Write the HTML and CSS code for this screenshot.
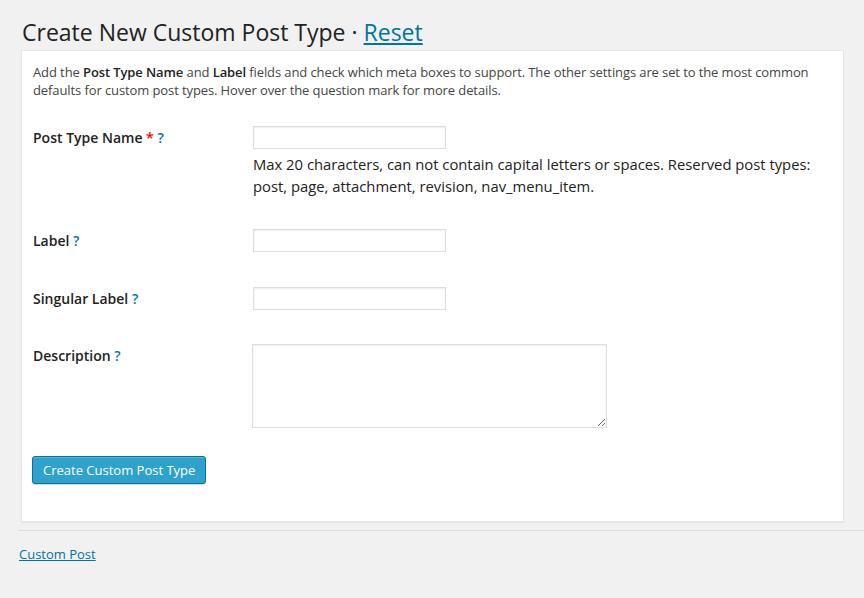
FILE: index.html
```html
<!DOCTYPE html>
<html lang="en">
<head>
<meta charset="utf-8">
<title>Create New Custom Post Type</title>
<link rel="stylesheet" href="styles.css">
</head>
<body>
<div class="wrap">
  <h2 class="page-title">Create New Custom Post Type · <a href="#" class="title-link">Reset</a></h2>
  <div class="panel">
    <p class="intro">Add the <strong>Post Type Name</strong> and <strong>Label</strong> fields and check which meta boxes to support. The other settings are set to the most common defaults for custom post types. Hover over the question mark for more details.</p>
    <form class="form">
      <div class="row row-first">
        <div class="label">Post Type Name <span class="req">*</span> <a href="#" class="help">?</a></div>
        <div class="field">
          <input type="text" class="text-input">
          <p class="hint">Max 20 characters, can not contain capital letters or spaces. Reserved post types: post, page, attachment, revision, nav_menu_item.</p>
        </div>
      </div>
      <div class="row">
        <div class="label">Label <a href="#" class="help">?</a></div>
        <div class="field"><input type="text" class="text-input"></div>
      </div>
      <div class="row">
        <div class="label">Singular Label <a href="#" class="help">?</a></div>
        <div class="field"><input type="text" class="text-input"></div>
      </div>
      <div class="row row-desc">
        <div class="label">Description <a href="#" class="help">?</a></div>
        <div class="field"><textarea class="textarea"></textarea></div>
      </div>
      <div class="actions">
        <button type="button" class="button-primary">Create Custom Post Type</button>
      </div>
    </form>
  </div>
</div>
<div class="footer">
  <a href="#" class="footer-link">Custom Post</a>
</div>
</body>
</html>
```
FILE: styles.css
```css
html, body {
  margin: 0;
  padding: 0;
  background: #f1f1f1;
  font-family: "Open Sans", "Liberation Sans", sans-serif;
  color: #444;
}

.wrap {
  padding: 10px 20px 0 21px;
}

.page-title {
  margin: 0 0 3px 0;
  padding: 8px 0 0 1px;
  font-size: 23px;
  line-height: 29px;
  font-weight: 400;
  color: #222;
}

.title-link {
  color: #0074a2;
  text-decoration: underline;
}

.panel {
  background: #fff;
  border: 1px solid #e5e5e5;
  box-shadow: 0 1px 1px rgba(0, 0, 0, 0.04);
  padding: 12px 11px 37px 11px;
}

.intro {
  margin: 0;
  font-size: 13px;
  line-height: 18px;
  letter-spacing: -0.1px;
  color: #444;
}

.intro strong {
  font-weight: 600;
  color: #222;
}

.form {
  margin: 27px 0 0 0;
}

.row {
  display: grid;
  grid-template-columns: 220px 1fr;
  padding-top: 35px;
}

.row-first {
  padding-top: 0;
}

.row-desc {
  padding-top: 34px;
}

.label {
  padding-top: 2px;
  font-size: 14px;
  line-height: 20px;
  font-weight: 600;
  color: #222;
}

.req {
  color: #f00;
}

.help {
  color: #0074a2;
  text-decoration: none;
  font-weight: 600;
}

.field {
  display: flex;
  flex-direction: column;
  align-items: flex-start;
}

.text-input {
  box-sizing: border-box;
  width: 193px;
  height: 23px;
  margin: 0;
  border: 1px solid #ddd;
  box-shadow: inset 0 1px 2px rgba(0, 0, 0, 0.07);
  background: #fff;
  font-family: inherit;
  font-size: 14px;
  padding: 2px 4px;
}

.hint {
  margin: 4px 0 -3px 0;
  font-size: 14.8px;
  line-height: 22px;
  color: #222;
}

.textarea {
  box-sizing: border-box;
  width: 355px;
  height: 84px;
  margin: 0 0 0 -1px;
  border: 1px solid #ddd;
  box-shadow: inset 0 1px 2px rgba(0, 0, 0, 0.07);
  background: #fff;
  font-family: inherit;
  font-size: 14px;
  padding: 2px 4px;
}

.actions {
  padding-top: 28px;
  margin-left: -1px;
}

.button-primary {
  box-sizing: border-box;
  height: 28px;
  margin: 0;
  padding: 0 10px 1px;
  background: #2ea2cc;
  border: 1px solid #0074a2;
  border-radius: 3px;
  box-shadow: inset 0 1px 0 rgba(120, 200, 230, 0.5), 0 1px 0 rgba(0, 0, 0, 0.15);
  color: #fff;
  font-family: inherit;
  font-size: 13px;
  line-height: 26px;
  cursor: pointer;
}

.footer {
  margin: 8px 0 0 18px;
  border-top: 1px solid #ddd;
  padding: 14px 0 0 1px;
  font-size: 13px;
  line-height: 18px;
}

.footer-link {
  color: #0074a2;
  text-decoration: underline;
}
```
